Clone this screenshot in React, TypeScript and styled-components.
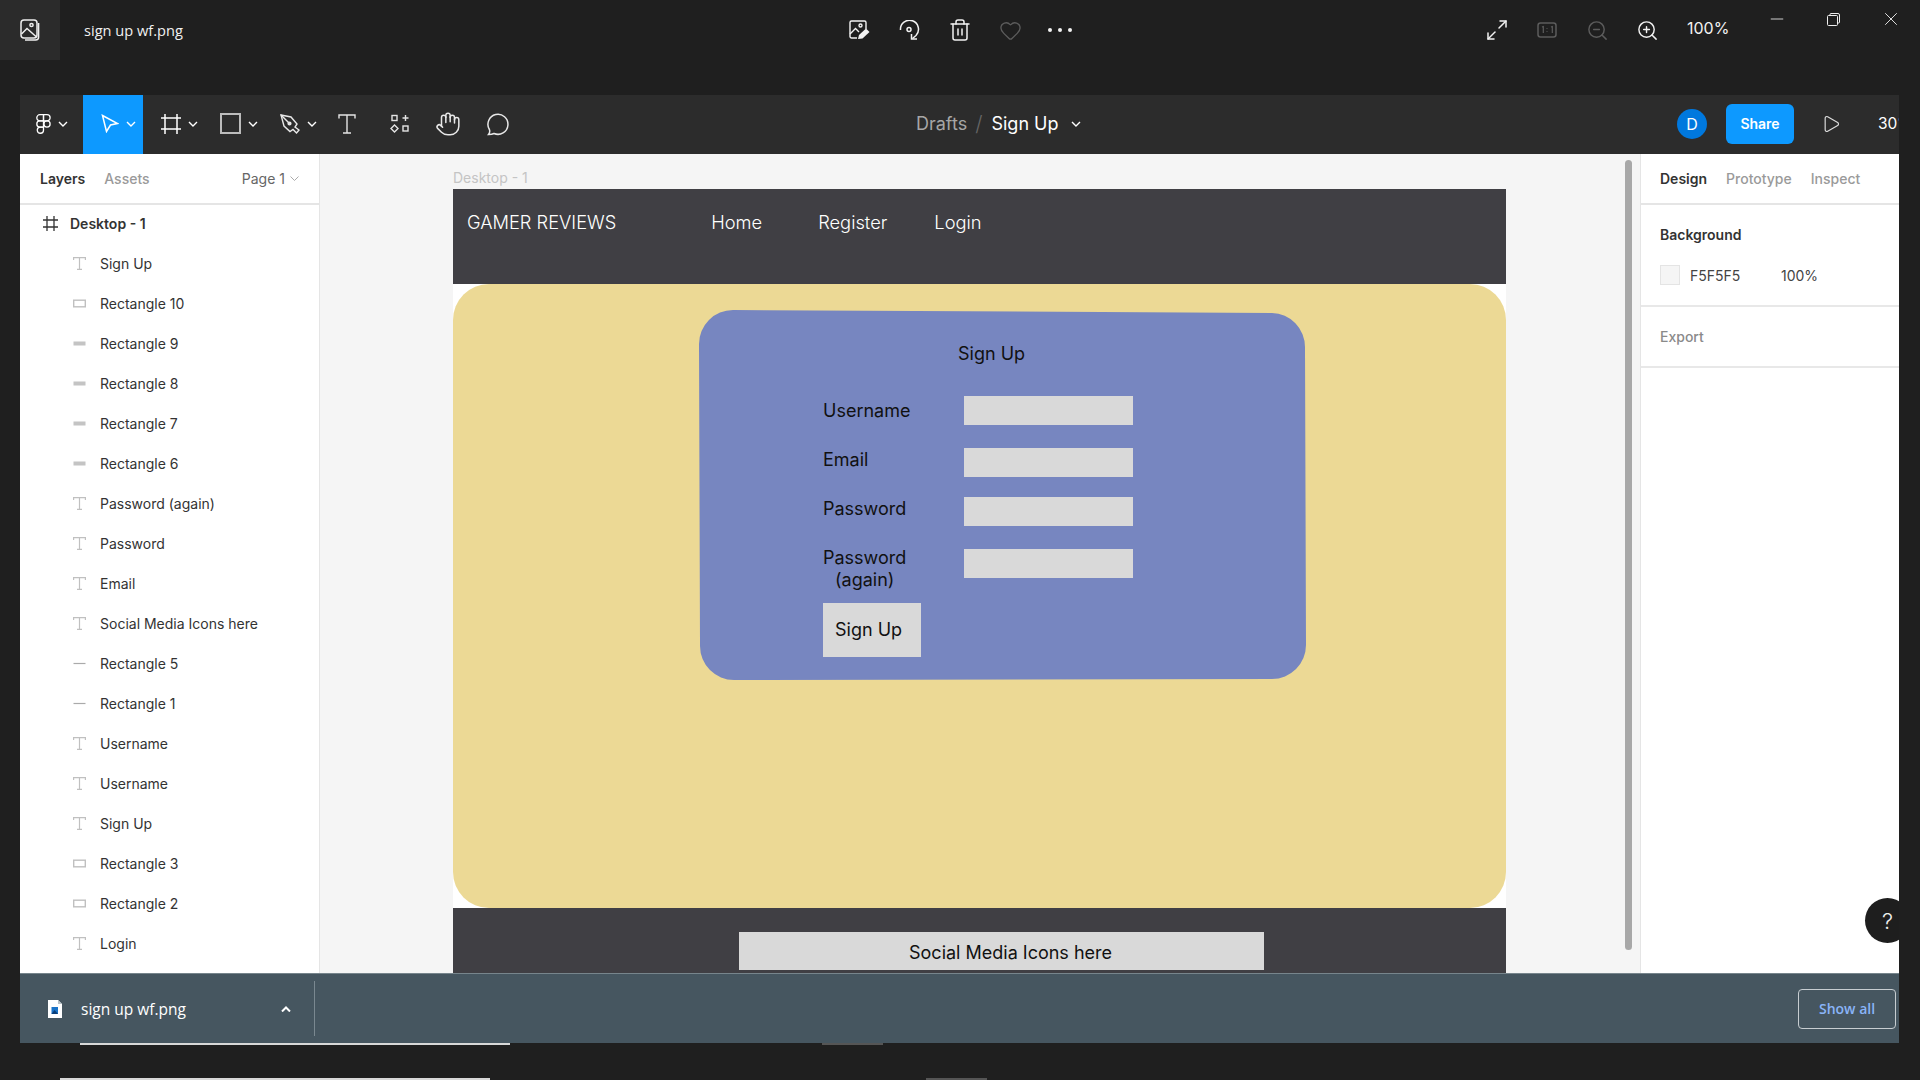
import styled, { createGlobalStyle } from "styled-components";
import { Hand, Heart, Maximize2, Minus, Play, Trash2, X, ZoomIn, ZoomOut } from "lucide-react";

const GlobalStyle = createGlobalStyle`
  html, body {
    margin: 0;
    padding: 0;
    background: #1f1f1f;
  }
  * {
    box-sizing: border-box;
  }
`;

const Page = styled.div`
  width: 1920px;
  height: 1080px;
  overflow: hidden;
  background: #1f1f1f;
  font-family: Inter, "Liberation Sans", sans-serif;
`;

/* viewer title bar */
const TitleBar = styled.div`
  height: 95px;
  display: flex;
  align-items: flex-start;
  color: #fff;
`;

const AppTile = styled.div`
  width: 60px;
  height: 60px;
  background: #2b2b2b;
  display: flex;
  align-items: center;
  justify-content: center;
`;

const FileName = styled.div`
  width: 775px;
  padding-left: 24px;
  height: 60px;
  line-height: 61px;
  font-family: "Open Sans", "Liberation Sans", sans-serif;
  font-size: 14.6px;
  color: #f0f0f0;
`;

const IconGroup = styled.div<{ $left?: number }>`
  display: flex;
  margin-left: ${(p) => p.$left ?? 0}px;
`;

const IconSlot = styled.div<{ $dim?: boolean }>`
  width: 50px;
  height: 60px;
  display: flex;
  align-items: center;
  justify-content: center;
  color: ${(p) => (p.$dim ? "#5c5c5c" : "#f2f2f2")};
`;

const ZoomValue = styled.div`
  width: 61px;
  margin-left: 15px;
  height: 57px;
  line-height: 57px;
  font-size: 16px;
  color: #f2f2f2;
`;

const WindowButtons = styled.div`
  display: flex;
`;

const WindowButton = styled.div`
  width: 57px;
  height: 38px;
  display: flex;
  align-items: center;
  justify-content: center;
  color: #f0f0f0;
`;

/* figma window */
const FigmaWindow = styled.div`
  width: 1879px;
  margin-left: 20px;
  height: 948px;
  display: flex;
  flex-direction: column;
`;

const Toolbar = styled.div`
  height: 59px;
  flex: none;
  background: #2c2c2c;
  display: flex;
  align-items: center;
  overflow: hidden;
  color: #fff;
  padding-bottom: 2px;
`;

const LogoButton = styled.div`
  width: 63px;
  height: 100%;
  display: flex;
  align-items: center;
  gap: 7px;
  padding-left: 16px;
`;

const MoveButton = styled.div`
  width: 60px;
  align-self: stretch;
  margin-bottom: -2px;
  padding-bottom: 2px;
  background: #0d99ff;
  display: flex;
  align-items: center;
  gap: 7px;
  padding-left: 18px;
`;

const ToolWithMenu = styled.div<{ $left: number }>`
  display: flex;
  align-items: center;
  gap: 7px;
  margin-left: ${(p) => p.$left}px;
`;

const ToolSlot = styled.div<{ $w: number }>`
  width: ${(p) => p.$w}px;
  display: flex;
  justify-content: center;
  align-items: center;
`;

const Breadcrumb = styled.div`
  display: flex;
  align-items: center;
  margin-left: 394px;
  font-size: 18px;
`;

const CrumbParent = styled.span`
  color: #a6a6a6;
`;

const CrumbSlash = styled.span`
  color: #666;
  margin: 0 9px 0 8px;
  font-size: 21px;
  font-weight: 300;
`;

const CrumbCurrent = styled.span`
  color: #fff;
  margin-right: 12px;
`;

const ToolbarRight = styled.div`
  margin-left: auto;
  display: flex;
  align-items: center;
`;

const Avatar = styled.div`
  width: 30px;
  height: 30px;
  border-radius: 50%;
  background: #0078de;
  color: #fff;
  font-size: 16px;
  display: flex;
  align-items: center;
  justify-content: center;
`;

const ShareButton = styled.div`
  width: 68px;
  height: 40px;
  margin-left: 19px;
  border-radius: 6px;
  background: #0d99ff;
  color: #fff;
  font-size: 14px;
  font-weight: 600;
  display: flex;
  align-items: center;
  justify-content: center;
`;

const PlayWrap = styled.div`
  margin-left: 27px;
  display: flex;
  color: #ddd;
`;

const ScaleValue = styled.div`
  width: 21px;
  margin-left: 37px;
  overflow: hidden;
  white-space: nowrap;
  font-size: 15.5px;
`;

const Workspace = styled.div`
  flex: 1;
  min-height: 0;
  display: flex;
`;

const LeftPanel = styled.div`
  width: 300px;
  flex: none;
  background: #fff;
  border-right: 1px solid #e5e5e5;
  overflow: hidden;
`;

const PanelTabs = styled.div`
  height: 51px;
  display: flex;
  align-items: center;
  padding-left: 20px;
  border-bottom: 2px solid #e5e5e5;
  font-size: 14px;
`;

const Tab = styled.div<{ $active?: boolean; $left?: number }>`
  margin-left: ${(p) => p.$left ?? 0}px;
  color: ${(p) => (p.$active ? "#333" : "#9a9a9a")};
  font-weight: ${(p) => (p.$active ? 600 : 500)};
`;

const PagePicker = styled.div`
  margin-left: auto;
  margin-right: 20px;
  display: flex;
  align-items: center;
  gap: 5px;
  color: #666;
  font-size: 14px;
`;

const LayerList = styled.div`
  display: flex;
  flex-direction: column;
  margin-top: -2px;
`;

const LayerRow = styled.div<{ $root?: boolean }>`
  height: 40px;
  display: flex;
  align-items: center;
  padding-left: ${(p) => (p.$root ? 23 : 53)}px;
  gap: ${(p) => (p.$root ? 12 : 14)}px;
  font-size: 14px;
  font-weight: ${(p) => (p.$root ? 600 : 400)};
  color: #333;
`;

const Canvas = styled.div`
  flex: 1;
  min-width: 0;
  position: relative;
  background: #f5f5f5;
  overflow: hidden;
  padding: 16px 0 0 133px;
`;

const FrameLabel = styled.div`
  height: 19px;
  font-size: 14px;
  line-height: 16px;
  color: #c4c4c4;
`;

const Scrollbar = styled.div`
  position: absolute;
  left: 1305px;
  top: 6px;
  width: 7px;
  height: 790px;
  border-radius: 4px;
  background: #a8a8a8;
`;

/* the wireframe that is being edited */
const Frame = styled.div`
  width: 1053px;
  background: #fff;
`;

const SiteNav = styled.div`
  height: 95px;
  background: #403f44;
  padding: 22px 0 0 14px;
  display: flex;
  align-items: flex-start;
  color: #fff;
  font-size: 18.3px;
  font-weight: 300;
  line-height: 22px;
`;

const SiteLink = styled.div<{ $left: number }>`
  margin-left: ${(p) => p.$left}px;
`;

const YellowBody = styled.div`
  height: 624px;
  background: #ecd995;
  border-radius: 36px;
  padding: 26px 0 0 246px;
`;

const SignUpCard = styled.div`
  width: 608px;
  height: 371px;
  background: #7786c0;
  clip-path: path(
    "M34 0 L573 3 A34 34 0 0 1 606 37 L607 335 A34 34 0 0 1 573 369 L35 370 A34 34 0 0 1 1 336 L0 34 A34 34 0 0 1 34 0 Z"
  );
  padding-top: 33px;
  font-size: 18px;
  line-height: 22px;
  color: #111;
`;

const CardTitle = styled.div`
  margin-left: 259px;
  height: 22px;
`;

const FormColumns = styled.div`
  margin-top: 33px;
  padding-left: 124px;
  display: flex;
  align-items: flex-start;
`;

const LabelColumn = styled.div`
  width: 141px;
  display: flex;
  flex-direction: column;
  align-items: flex-start;
  gap: 27px;
  padding-top: 2px;
`;

const FieldLabel = styled.div`
  text-align: center;
`;

const FieldColumn = styled.div`
  margin-top: -2px;
`;

const Field = styled.div<{ $top: number }>`
  width: 169px;
  height: 29px;
  margin-top: ${(p) => p.$top}px;
  background: #d9d9d9;
`;

const SubmitButton = styled.div`
  width: 98px;
  height: 54px;
  margin: 12px 0 0 124px;
  padding-left: 12px;
  background: #d9d9d9;
  display: flex;
  align-items: center;
`;

const SiteFooter = styled.div`
  height: 90px;
  background: #403f44;
  padding: 24px 0 0 286px;
`;

const SocialBar = styled.div`
  width: 525px;
  height: 38px;
  background: #d9d9d9;
  padding: 10px 0 0 170px;
  font-size: 18px;
  line-height: 22px;
  color: #111;
`;

const RightPanel = styled.div`
  width: 259px;
  flex: none;
  position: relative;
  background: #fff;
  border-left: 1px solid #e5e5e5;
  overflow: hidden;
`;

const RightTabs = styled(PanelTabs)`
  padding-left: 19px;
`;

const PropertySection = styled.div<{ $h: number }>`
  height: ${(p) => p.$h}px;
  padding: 20px 0 0 19px;
  border-bottom: 2px solid #e8e8e8;
  font-size: 14px;
`;

const SectionTitle = styled.div<{ $muted?: boolean }>`
  line-height: 20px;
  font-weight: ${(p) => (p.$muted ? 500 : 600)};
  color: ${(p) => (p.$muted ? "#8a8a8a" : "#333")};
`;

const FillRow = styled.div`
  display: flex;
  align-items: center;
  margin-top: 20px;
  color: #444;
`;

const Swatch = styled.div`
  width: 20px;
  height: 20px;
  background: #f5f5f5;
  border: 1px solid #e4e4e4;
`;

const FillHex = styled.div`
  margin-left: 10px;
  width: 91px;
`;

const HelpBubble = styled.div`
  position: absolute;
  left: 224px;
  top: 744px;
  width: 45px;
  height: 45px;
  border-radius: 50%;
  background: #1e1e1e;
  color: #eee;
  font-size: 22px;
  font-weight: 300;
  display: flex;
  align-items: center;
  justify-content: center;
`;

/* chrome downloads shelf */
const DownloadBar = styled.div`
  height: 70px;
  flex: none;
  background: #465660;
  border-top: 1px solid #77858c;
  display: flex;
  align-items: center;
  padding-left: 28px;
  font-family: "Open Sans", "Liberation Sans", sans-serif;
  color: #fff;
`;

const DownloadName = styled.div`
  margin-left: 19px;
  width: 200px;
  font-size: 15.5px;
`;

const ShelfDivider = styled.div`
  width: 1px;
  height: 55px;
  margin-left: 23px;
  background: #7a8890;
`;

const ShowAll = styled.div`
  margin-left: auto;
  margin-right: 3px;
  width: 98px;
  height: 40px;
  border: 1px solid #c7cdd1;
  border-radius: 4px;
  color: #8ab4f8;
  font-size: 14px;
  font-weight: 600;
  display: flex;
  align-items: center;
  justify-content: center;
`;

const TailRow = styled.div<{ $top: number }>`
  display: flex;
  height: 2px;
  margin-top: ${(p) => p.$top}px;
`;

const TailLine = styled.div<{ $left: number; $w: number; $dim?: boolean }>`
  width: ${(p) => p.$w}px;
  margin-left: ${(p) => p.$left}px;
  background: ${(p) => (p.$dim ? "#555" : "#d8d8d8")};
`;

const Chevron = ({ color = "#fff", up = false }: { color?: string; up?: boolean }) => (
  <svg width="10" height="6" viewBox="0 0 10 6" fill="none" stroke={color} strokeWidth={up ? 2 : 1.4}>
    <path d={up ? "M1 5.5 L5 1.5 L9 5.5" : "M1 1 L5 5 L9 1"} />
  </svg>
);

const TinyChevron = () => (
  <svg width="9" height="5" viewBox="0 0 9 5" fill="none" stroke="#aaa" strokeWidth="1">
    <path d="M.5 .5 L4.5 4.5 L8.5 .5" />
  </svg>
);

const PictureIcon = () => (
  <svg width="20" height="22" viewBox="0 0 20 22" fill="none" stroke="#eee" strokeWidth="1.5">
    <rect x="1" y="1" width="16" height="18" rx="3" />
    <circle cx="11.5" cy="6" r="1.6" />
    <path d="M1.5 15 L7 9.5 L16.5 18" />
    <path d="M18.6 4 V18 a3 3 0 0 1 -3 3 H5" />
  </svg>
);

const EditImageIcon = () => (
  <svg width="22" height="20" viewBox="0 0 22 20" fill="none" stroke="#f2f2f2" strokeWidth="1.4">
    <path d="M8 18 H2.5 a1.5 1.5 0 0 1 -1.5 -1.5 V2.5 A1.5 1.5 0 0 1 2.5 1 H15.5 A1.5 1.5 0 0 1 17 2.5 V9" />
    <circle cx="11.5" cy="5.5" r="1.5" />
    <path d="M1 14 L6.5 8.5 L10 12" />
    <path d="M9 19 L10 15 L17 8.5 L20.5 12 L13.5 18.5 Z" fill="#f2f2f2" stroke="none" />
  </svg>
);

const RotateIcon = () => (
  <svg width="22" height="20" viewBox="0 0 22 20" fill="none" stroke="#f2f2f2" strokeWidth="1.5">
    <path d="M1.5 10 A9 9 0 1 1 17 15.5 L13.5 18.5" />
    <path d="M12.5 14 V19 H18" />
    <circle cx="10" cy="9.5" r="2" />
  </svg>
);

const RestoreIcon = () => (
  <svg width="13" height="13" viewBox="0 0 13 13" fill="none" stroke="#eee" strokeWidth="1">
    <rect x=".5" y="2.5" width="10" height="10" rx="1" />
    <path d="M3 2.5 V1.5 a1 1 0 0 1 1 -1 H11 a1.5 1.5 0 0 1 1.5 1.5 V9 a1 1 0 0 1 -1 1 H10.5" />
  </svg>
);

const OneToOneIcon = () => (
  <svg width="20" height="16" viewBox="0 0 20 16" fill="none" stroke="#5c5c5c" strokeWidth="1.5">
    <rect x="1" y="1" width="18" height="14" rx="2.5" />
    <path d="M5 5 L6.3 4.5 V11 M14 5 L15.3 4.5 V11 M10 6 V6.8 M10 9.2 V10" strokeWidth="1.2" />
  </svg>
);

const FigmaIcon = () => (
  <svg width="15" height="20" viewBox="0 0 15 20" fill="none" stroke="#fff" strokeWidth="1.3">
    <path d="M7.5 .7 H3.9 a3.1 3.1 0 0 0 0 6.2 H7.5 Z" />
    <path d="M7.5 .7 H11 a3.1 3.1 0 0 1 0 6.2 H7.5 Z" />
    <path d="M7.5 6.9 H3.9 a3.1 3.1 0 0 0 0 6.2 H7.5 Z" />
    <circle cx="11" cy="10" r="3.1" />
    <path d="M7.5 13.1 H3.9 a3.1 3.1 0 1 0 3.6 3.1 Z" />
  </svg>
);

const ArrowIcon = () => (
  <svg width="18" height="19" viewBox="0 0 18 19" fill="none" stroke="#fff" strokeWidth="1.5">
    <path d="M1.5 1.5 L16.5 9.5 L9.5 11 L5.5 17.5 Z" />
  </svg>
);

const FrameIcon = () => (
  <svg width="20" height="20" viewBox="0 0 20 20" fill="none" stroke="#fff" strokeWidth="1.5">
    <path d="M4 0 V20 M16 0 V20 M0 4 H20 M0 15 H20" />
  </svg>
);

const RectIcon = () => (
  <svg width="21" height="21" viewBox="0 0 21 21" fill="none" stroke="#bcbcbc" strokeWidth="2">
    <rect x="1" y="1" width="19" height="19" />
  </svg>
);

const PenIcon = () => (
  <svg width="20" height="20" viewBox="0 0 20 20" fill="none" stroke="#e8e8e8" strokeWidth="1.4">
    <path d="M1 1 L11 3 L17 10 L15 13 L19 16 L16.5 19 L13 15.5 L10 17.5 L4 12 Z" />
    <path d="M1 1 L8.5 8.5" />
    <circle cx="9.5" cy="9.5" r="1.4" fill="#e8e8e8" />
  </svg>
);

const TypeIcon = () => (
  <svg width="18" height="20" viewBox="0 0 18 20" fill="none" stroke="#e4e4e4" strokeWidth="1.4">
    <path d="M1 4.5 V1 H17 V4.5 M9 1 V19 M5 19 H13" />
  </svg>
);

const ComponentsIcon = () => (
  <svg width="20" height="20" viewBox="0 0 20 20" fill="none" stroke="#e4e4e4" strokeWidth="1.4">
    <rect x="2" y="1.5" width="5" height="5" />
    <path d="M15.5 1 V7 M12.5 4 H18.5" />
    <path d="M4.5 11 L8 14.5 L4.5 18 L1 14.5 Z" />
    <rect x="13" y="12" width="5" height="5" />
  </svg>
);

const CommentIcon = () => (
  <svg width="24" height="24" viewBox="0 0 24 24" fill="none" stroke="#e8e8e8" strokeWidth="1.5">
    <path d="M3.5 22.5 C5 20.5 5 19 4.4 17.5 A10 10 0 1 1 9 21.5 C7.5 22.3 5.5 22.5 3.5 22.5 Z" />
  </svg>
);

const LayerHash = () => (
  <svg width="15" height="15" viewBox="0 0 15 15" fill="none" stroke="#333" strokeWidth="1.3">
    <path d="M4 0 V15 M11 0 V15 M0 4 H15 M0 11 H15" />
  </svg>
);

type LayerKind = "text" | "outline" | "bar" | "line";

const LayerGlyph = ({ kind }: { kind: LayerKind }) => (
  <svg width="13" height="13" viewBox="0 0 13 13" fill="none" stroke="#c0c0c0" strokeWidth="1.2">
    {kind === "text" && <path d="M.6 3 V.7 H12.4 V3 M6.5 .7 V12.4 M4 12.4 H9" />}
    {kind === "outline" && <rect x=".7" y="3.2" width="11.6" height="6.6" strokeWidth="1.4" />}
    {kind === "bar" && <rect x=".5" y="4.5" width="12" height="4" fill="#c4c4c4" stroke="none" />}
    {kind === "line" && <path d="M.5 6.5 H12.5" stroke="#aaa" />}
  </svg>
);

const FileGlyph = () => (
  <svg width="14" height="18" viewBox="0 0 14 18">
    <path d="M0 0 H10 L14 4 V18 H0 Z" fill="#fff" />
    <path d="M10 0 L14 4 H10 Z" fill="#b9c3c9" />
    <rect x="3.5" y="7" width="6.5" height="7" fill="#1a73c8" />
    <path d="M3.5 14 L6.5 10 L10 14 Z" fill="#0b3e78" />
  </svg>
);

const layers: { name: string; kind: LayerKind }[] = [
  { name: "Sign Up", kind: "text" },
  { name: "Rectangle 10", kind: "outline" },
  { name: "Rectangle 9", kind: "bar" },
  { name: "Rectangle 8", kind: "bar" },
  { name: "Rectangle 7", kind: "bar" },
  { name: "Rectangle 6", kind: "bar" },
  { name: "Password (again)", kind: "text" },
  { name: "Password", kind: "text" },
  { name: "Email", kind: "text" },
  { name: "Social Media Icons here", kind: "text" },
  { name: "Rectangle 5", kind: "line" },
  { name: "Rectangle 1", kind: "line" },
  { name: "Username", kind: "text" },
  { name: "Username", kind: "text" },
  { name: "Sign Up", kind: "text" },
  { name: "Rectangle 3", kind: "outline" },
  { name: "Rectangle 2", kind: "outline" },
  { name: "Login", kind: "text" },
];

const App = () => {
  return (
    <Page>
      <GlobalStyle />
      <TitleBar>
        <AppTile>
          <PictureIcon />
        </AppTile>
        <FileName>sign up wf.png</FileName>
        <IconGroup>
          <IconSlot><EditImageIcon /></IconSlot>
          <IconSlot><RotateIcon /></IconSlot>
          <IconSlot><Trash2 size={24} strokeWidth={1.5} /></IconSlot>
          <IconSlot $dim><Heart size={23} strokeWidth={1.4} /></IconSlot>
          <IconSlot>
            <svg width="24" height="4" viewBox="0 0 24 4" fill="#f2f2f2">
              <circle cx="2" cy="2" r="2" />
              <circle cx="12" cy="2" r="2" />
              <circle cx="22" cy="2" r="2" />
            </svg>
          </IconSlot>
        </IconGroup>
        <IconGroup $left={387}>
          <IconSlot><Maximize2 size={24} strokeWidth={1.5} /></IconSlot>
          <IconSlot $dim><OneToOneIcon /></IconSlot>
          <IconSlot $dim><ZoomOut size={23} strokeWidth={1.5} /></IconSlot>
          <IconSlot><ZoomIn size={23} strokeWidth={1.5} /></IconSlot>
        </IconGroup>
        <ZoomValue>100%</ZoomValue>
        <WindowButtons>
          <WindowButton><Minus size={20} strokeWidth={1} /></WindowButton>
          <WindowButton><RestoreIcon /></WindowButton>
          <WindowButton><X size={22} strokeWidth={1} /></WindowButton>
        </WindowButtons>
      </TitleBar>

      <FigmaWindow>
        <Toolbar>
          <LogoButton>
            <FigmaIcon />
            <Chevron />
          </LogoButton>
          <MoveButton>
            <ArrowIcon />
            <Chevron />
          </MoveButton>
          <ToolWithMenu $left={18}>
            <FrameIcon />
            <Chevron />
          </ToolWithMenu>
          <ToolWithMenu $left={22}>
            <RectIcon />
            <Chevron />
          </ToolWithMenu>
          <ToolWithMenu $left={22}>
            <PenIcon />
            <Chevron />
          </ToolWithMenu>
          <ToolSlot $w={59}><TypeIcon /></ToolSlot>
          <ToolSlot $w={48}><ComponentsIcon /></ToolSlot>
          <ToolSlot $w={48}><Hand size={26} strokeWidth={1.4} color="#e8e8e8" /></ToolSlot>
          <ToolSlot $w={50}><CommentIcon /></ToolSlot>
          <Breadcrumb>
            <CrumbParent>Drafts</CrumbParent>
            <CrumbSlash>/</CrumbSlash>
            <CrumbCurrent>Sign Up</CrumbCurrent>
            <Chevron />
          </Breadcrumb>
          <ToolbarRight>
            <Avatar>D</Avatar>
            <ShareButton>Share</ShareButton>
            <PlayWrap><Play size={20} strokeWidth={1.4} /></PlayWrap>
            <ScaleValue>30%</ScaleValue>
          </ToolbarRight>
        </Toolbar>

        <Workspace>
          <LeftPanel>
            <PanelTabs>
              <Tab $active>Layers</Tab>
              <Tab $left={19}>Assets</Tab>
              <PagePicker>
                Page 1 <TinyChevron />
              </PagePicker>
            </PanelTabs>
            <LayerList>
              <LayerRow $root>
                <LayerHash />
                Desktop - 1
              </LayerRow>
              {layers.map((layer, i) => (
                <LayerRow key={i}>
                  <LayerGlyph kind={layer.kind} />
                  {layer.name}
                </LayerRow>
              ))}
            </LayerList>
          </LeftPanel>

          <Canvas>
            <FrameLabel>Desktop - 1</FrameLabel>
            <Frame>
              <SiteNav>
                GAMER REVIEWS
                <SiteLink $left={95}>Home</SiteLink>
                <SiteLink $left={56}>Register</SiteLink>
                <SiteLink $left={47}>Login</SiteLink>
              </SiteNav>
              <YellowBody>
                <SignUpCard>
                  <CardTitle>Sign Up</CardTitle>
                  <FormColumns>
                    <LabelColumn>
                      <FieldLabel>Username</FieldLabel>
                      <FieldLabel>Email</FieldLabel>
                      <FieldLabel>Password</FieldLabel>
                      <FieldLabel>
                        Password
                        <br />
                        (again)
                      </FieldLabel>
                    </LabelColumn>
                    <FieldColumn>
                      <Field $top={0} />
                      <Field $top={23} />
                      <Field $top={20} />
                      <Field $top={23} />
                    </FieldColumn>
                  </FormColumns>
                  <SubmitButton>Sign Up</SubmitButton>
                </SignUpCard>
              </YellowBody>
              <SiteFooter>
                <SocialBar>Social Media Icons here</SocialBar>
              </SiteFooter>
            </Frame>
            <Scrollbar />
          </Canvas>

          <RightPanel>
            <RightTabs>
              <Tab $active>Design</Tab>
              <Tab $left={19}>Prototype</Tab>
              <Tab $left={19}>Inspect</Tab>
            </RightTabs>
            <PropertySection $h={102}>
              <SectionTitle>Background</SectionTitle>
              <FillRow>
                <Swatch />
                <FillHex>F5F5F5</FillHex>
                100%
              </FillRow>
            </PropertySection>
            <PropertySection $h={61}>
              <SectionTitle $muted>Export</SectionTitle>
            </PropertySection>
            <HelpBubble>?</HelpBubble>
          </RightPanel>
        </Workspace>

        <DownloadBar>
          <FileGlyph />
          <DownloadName>sign up wf.png</DownloadName>
          <Chevron up />
          <ShelfDivider />
          <ShowAll>Show all</ShowAll>
        </DownloadBar>
      </FigmaWindow>

      <TailRow $top={0}>
        <TailLine $left={80} $w={430} />
        <TailLine $left={312} $w={61} $dim />
      </TailRow>
      <TailRow $top={33}>
        <TailLine $left={60} $w={430} />
        <TailLine $left={436} $w={61} $dim />
      </TailRow>
    </Page>
  );
};

export default App;
